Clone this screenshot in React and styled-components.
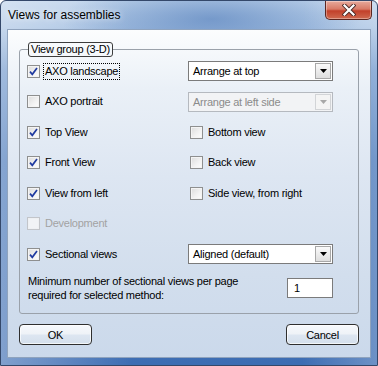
import React from "react";
import styled, { createGlobalStyle } from "styled-components";

const GlobalStyle = createGlobalStyle`
  html, body {
    margin: 0;
    padding: 0;
    overflow: hidden;
    background: #fff;
  }
  * {
    box-sizing: border-box;
  }
`;

const Window = styled.div`
  width: 378px;
  height: 366px;
  display: flex;
  flex-direction: column;
  padding: 0 6px 7px 6px;
  border: 1px solid #34486a;
  border-radius: 6px 6px 0 0;
  font-family: "Liberation Sans", Arial, sans-serif;
  font-size: 11px;
  letter-spacing: -0.25px;
  color: #000;
  background:
    radial-gradient(ellipse 150px 40px at 210px 18px, rgba(70, 115, 180, 0.55), rgba(70, 115, 180, 0) 100%),
    linear-gradient(90deg, rgba(255, 255, 255, 0.35), rgba(255, 255, 255, 0) 35%, rgba(255, 255, 255, 0) 80%, rgba(255, 255, 255, 0.25)),
    linear-gradient(#bed3eb 0px, #a9c3e3 26px, #6f97cc 70px, #4676b9 160px, #3d6db3 100%);
`;

const TitleBar = styled.div`
  height: 28px;
  display: flex;
  align-items: center;
  padding-left: 1px;
`;

const Title = styled.span`
  font-size: 12px;
  letter-spacing: 0;
  padding-bottom: 1px;
  text-shadow: 0 0 6px rgba(255, 255, 255, 0.9);
`;

const CloseButton = styled.div`
  margin-left: auto;
  margin-right: -1px;
  align-self: flex-start;
  width: 47px;
  height: 19px;
  border: 1px solid #5b2620;
  border-top: 0;
  border-radius: 0 0 5px 5px;
  display: flex;
  align-items: center;
  justify-content: center;
  background: linear-gradient(#e7aa9c 0%, #d87a66 45%, #c2402a 55%, #cf6a50 100%);
  box-shadow: inset 0 0 0 1px rgba(255, 255, 255, 0.35);
`;

const Client = styled.div`
  flex: 1;
  display: flex;
  flex-direction: column;
  padding: 12px 11px 12px 11px;
  border: 1px solid #8fa3bd;
  background: linear-gradient(#fcfdfe 0%, #eaf0f7 18%, #dde6f2 45%, #d2deed 75%, #cbd9eb 100%);
`;

const Group = styled.fieldset`
  margin: 0;
  padding: 4px 25px 11px 7px;
  border: 1px solid #9aa1aa;
  border-radius: 3px;
`;

const Legend = styled.legend`
  margin-left: 1px;
  padding: 0 2px;
  line-height: 13px;
  border: 1px solid #3c3c3c;
  border-radius: 3px;
`;

const OptionGrid = styled.div`
  display: grid;
  grid-template-columns: 161px 145px;
  grid-auto-rows: 20px;
  row-gap: 10.5px;
  align-items: center;
`;

const Option = styled.label`
  display: flex;
  align-items: center;
  gap: 4px;
  padding-left: ${(p) => (p.$inset ? "2px" : "0")};
  color: ${(p) => (p.$disabled ? "#a3a3a3" : "#000")};
`;

const Box = styled.span`
  width: 13px;
  height: 13px;
  flex: none;
  display: flex;
  align-items: center;
  justify-content: center;
  border: 1px solid ${(p) => (p.$disabled ? "#c2c5ca" : "#8e8f8f")};
  background: ${(p) =>
    p.$disabled
      ? "#f1f3f6"
      : "linear-gradient(135deg, #dcdcdc 0%, #f3f3f3 60%, #fdfdfd 100%)"};
  box-shadow: inset 0 0 0 1px ${(p) => (p.$disabled ? "#eef0f3" : "#f4f4f4")};
`;

const Caption = styled.span`
  padding: 1px 1px;
  margin-left: -1px;
  border: 1px dotted ${(p) => (p.$focus ? "#000" : "transparent")};
  line-height: 13px;
`;

const Combo = styled.div`
  width: 145px;
  height: 20px;
  display: flex;
  align-items: center;
  padding: 0 1px 0 4px;
  border: 1px solid ${(p) => (p.$disabled ? "#b5b9bf" : "#7b7b7b")};
  background: ${(p) => (p.$disabled ? "#f2f3f5" : "#fff")};
  color: ${(p) => (p.$disabled ? "#8b8b8b" : "#000")};
`;

const ComboText = styled.span`
  flex: 1;
`;

const DropButton = styled.span`
  width: 16px;
  height: 16px;
  display: flex;
  align-items: center;
  justify-content: center;
  border: 1px solid ${(p) => (p.$disabled ? "#d2d4d7" : "#a8a8a8")};
  background: ${(p) =>
    p.$disabled ? "#f4f4f4" : "linear-gradient(#fafafa, #ececec 50%, #dedede)"};
`;

const MinRow = styled.div`
  margin-top: 10px;
  display: flex;
  align-items: center;
  justify-content: space-between;
  padding-left: 1px;
`;

const MinText = styled.div`
  line-height: 14px;
`;

const NumberField = styled.div`
  width: 46px;
  height: 20px;
  padding: 0 6px;
  display: flex;
  align-items: center;
  border: 1px solid #7b7b7b;
  background: #fff;
`;

const ButtonRow = styled.div`
  margin-top: 10px;
  display: flex;
  justify-content: space-between;
`;

const Button = styled.div`
  width: 73px;
  height: 21px;
  display: flex;
  align-items: center;
  justify-content: center;
  border: 1px solid #2f2f2f;
  border-radius: 4px;
  background: linear-gradient(#f7f9fc 0%, #eef2f7 48%, #dde6f1 52%, #d4dfec 100%);
  box-shadow: inset 0 0 0 1px rgba(255, 255, 255, 0.7);
`;

const Check = ({ checked, disabled }) => (
  <Box $disabled={disabled}>
    {checked && (
      <svg width="9" height="9" viewBox="0 0 9 9">
        <path
          d="M1 4.6 L3.3 7.3 L8 1"
          fill="none"
          stroke="#1f3aa0"
          strokeWidth="1.7"
        />
      </svg>
    )}
  </Box>
);

const Arrow = ({ disabled }) => (
  <svg width="7" height="4" viewBox="0 0 7 4">
    <path d="M0 0 H7 L3.5 4 Z" fill={disabled ? "#a8a8a8" : "#000"} />
  </svg>
);

const Choice = ({ label, checked, disabled, focus, inset }) => (
  <Option $disabled={disabled} $inset={inset}>
    <Check checked={checked} disabled={disabled} />
    <Caption $focus={focus}>{label}</Caption>
  </Option>
);

const Select = ({ value, disabled }) => (
  <Combo $disabled={disabled}>
    <ComboText>{value}</ComboText>
    <DropButton $disabled={disabled}>
      <Arrow disabled={disabled} />
    </DropButton>
  </Combo>
);

export default function App() {
  return (
    <>
      <GlobalStyle />
      <Window>
        <TitleBar>
          <Title>Views for assemblies</Title>
          <CloseButton>
            <svg width="14" height="12" viewBox="0 0 14 12">
              <path
                d="M2.5 1.5 L11.5 10.5 M11.5 1.5 L2.5 10.5"
                stroke="#4a2a26"
                strokeWidth="4"
                strokeLinecap="square"
              />
              <path
                d="M2.5 1.5 L11.5 10.5 M11.5 1.5 L2.5 10.5"
                stroke="#fff"
                strokeWidth="2.2"
                strokeLinecap="square"
              />
            </svg>
          </CloseButton>
        </TitleBar>
        <Client>
          <Group>
            <Legend>View group (3-D)</Legend>
            <OptionGrid>
              <Choice label="AXO landscape" checked focus />
              <Select value="Arrange at top" />
              <Choice label="AXO portrait" />
              <Select value="Arrange at left side" disabled />
              <Choice label="Top View" checked />
              <Choice label="Bottom view" inset />
              <Choice label="Front View" checked />
              <Choice label="Back view" inset />
              <Choice label="View from left" checked />
              <Choice label="Side view, from right" inset />
              <Choice label="Development" disabled />
              <span />
              <Choice label="Sectional views" checked />
              <Select value="Aligned (default)" />
            </OptionGrid>
            <MinRow>
              <MinText>
                Minimum number of sectional views per page
                <br />
                required for selected method:
              </MinText>
              <NumberField>1</NumberField>
            </MinRow>
          </Group>
          <ButtonRow>
            <Button>OK</Button>
            <Button>Cancel</Button>
          </ButtonRow>
        </Client>
      </Window>
    </>
  );
}
